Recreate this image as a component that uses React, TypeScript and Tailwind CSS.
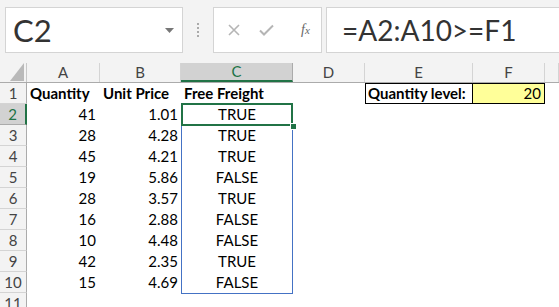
import React from "react";

const cols = [
  { w: 73, l: "A" },
  { w: 81, l: "B" },
  { w: 112, l: "C" },
  { w: 72, l: "D" },
  { w: 108, l: "E" },
  { w: 72, l: "F" },
  { w: 14, l: "" },
];

const data: [string, string, string][] = [
  ["41", "1.01", "TRUE"],
  ["28", "4.28", "TRUE"],
  ["45", "4.21", "TRUE"],
  ["19", "5.86", "FALSE"],
  ["28", "3.57", "TRUE"],
  ["16", "2.88", "FALSE"],
  ["10", "4.48", "FALSE"],
  ["42", "2.35", "TRUE"],
  ["15", "4.69", "FALSE"],
];

const font = { fontFamily: "Lato, 'Open Sans', sans-serif" };

export default function App() {
  return (
    <div
      className="relative w-[559px] h-[307px] overflow-hidden bg-white text-black"
      style={font}
    >
      {/* Formula bar */}
      <div className="h-[63px] bg-[#f3f3f3] flex items-start pt-[7px] pl-[5px]">
        <div className="w-[178px] h-[46px] bg-white border border-[#d4d4d4] flex items-center pl-[7px] pr-[8px]">
          <span className="text-[31px] text-[#333] leading-none flex-1">C2</span>
          <svg width="9" height="5" viewBox="0 0 9 5">
            <path d="M0 0 L9 0 L4.5 5 Z" fill="#777" />
          </svg>
        </div>
        <div className="w-[30px] h-[46px] flex flex-col items-center justify-center gap-[2px]">
          <span className="w-[2px] h-[2px] bg-[#aaa]" />
          <span className="w-[2px] h-[2px] bg-[#aaa]" />
          <span className="w-[2px] h-[2px] bg-[#aaa]" />
          <span className="w-[2px] h-[2px] bg-[#aaa]" />
        </div>
        <div className="w-[109px] h-[46px] bg-white border border-[#d4d4d4] flex items-center">
          <svg width="12" height="12" viewBox="0 0 12 12" className="ml-[14px]">
            <path d="M1 1 L11 11 M11 1 L1 11" stroke="#b5b5b5" strokeWidth="1.6" />
          </svg>
          <svg width="15" height="12" viewBox="0 0 15 12" className="ml-[19px]">
            <path d="M1 6.5 L5 10.5 L14 1.5" stroke="#b5b5b5" strokeWidth="2" fill="none" />
          </svg>
          <span
            className="ml-[27px] text-[14px] italic text-[#666] leading-none"
            style={{ fontFamily: "'Liberation Serif', serif" }}
          >
            f<span className="text-[11px]">x</span>
          </span>
        </div>
        <div className="ml-[4px] flex-1 h-[46px] bg-white border border-[#d4d4d4] border-r-0 flex items-center pl-[15px]">
          <span className="text-[28px] text-[#333] leading-none">=A2:A10&gt;=F1</span>
        </div>
      </div>

      {/* Grid */}
      <div className="relative">
        {/* Column headers */}
        <div className="flex h-[20px] bg-[#f3f3f3] border-b border-[#ababab]">
          <div className="relative w-[27px] shrink-0 border-r border-[#c8c8c8]">
            <svg width="14" height="18" viewBox="0 0 14 18" className="absolute right-[2px] bottom-[1px]">
              <path d="M14 0 L14 18 L0 18 Z" fill="#b9b9b9" />
            </svg>
          </div>
          {cols.map((c) => (
            <div
              key={c.l + c.w}
              className={
                c.l === "C"
                  ? "shrink-0 flex items-center justify-center text-[15px] bg-[#d2d2d2] text-[#217346] border-r border-[#ababab] border-b-2 border-b-[#217346]"
                  : "shrink-0 flex items-center justify-center text-[15px] text-[#444] border-r border-[#d4d4d4]"
              }
              style={{ width: c.w }}
            >
              {c.l}
            </div>
          ))}
        </div>

        {/* Row 1 */}
        <div className="flex h-[21px]">
          <div className="w-[27px] shrink-0 bg-[#f3f3f3] border-r border-[#ababab] border-b border-b-[#d4d4d4] flex items-center justify-center text-[15px] text-[#444]">
            1
          </div>
          <div className="w-[73px] shrink-0 flex items-center pl-[3px] text-[15px] font-bold">Quantity</div>
          <div className="w-[81px] shrink-0 flex items-center pl-[3px] text-[15px] font-bold">Unit Price</div>
          <div className="w-[112px] shrink-0 flex items-center pl-[3px] text-[15px] font-bold">Free Freight</div>
          <div className="w-[72px] shrink-0" />
          <div className="w-[108px] shrink-0 flex items-center pl-[2px] text-[15px] font-bold border border-black">
            Quantity level:
          </div>
          <div className="w-[72px] shrink-0 flex items-center justify-end pr-[3px] text-[15px] bg-[#ffff99] border border-l-0 border-black">
            20
          </div>
        </div>

        {/* Rows 2-10 */}
        {data.map((r, i) => (
          <div key={i} className="flex h-[21px]">
            <div
              className={
                i === 0
                  ? "w-[27px] shrink-0 bg-[#d2d2d2] border-r-2 border-[#217346] border-b border-b-[#ababab] flex items-center justify-center text-[15px] text-[#217346]"
                  : "w-[27px] shrink-0 bg-[#f3f3f3] border-r border-[#ababab] border-b border-b-[#d4d4d4] flex items-center justify-center text-[15px] text-[#444]"
              }
            >
              {i + 2}
            </div>
            <div className="w-[73px] shrink-0 flex items-center justify-end pr-[4px] text-[15px]">{r[0]}</div>
            <div className="w-[81px] shrink-0 flex items-center justify-end pr-[3px] text-[15px]">{r[1]}</div>
            <div className="w-[112px] shrink-0 flex items-center justify-center text-[15px]">{r[2]}</div>
          </div>
        ))}

        {/* Row 11 */}
        <div className="flex h-[21px]">
          <div className="w-[27px] shrink-0 bg-[#f3f3f3] border-r border-[#ababab] flex items-center justify-center text-[15px] text-[#444]">
            11
          </div>
        </div>

        {/* Spill range border */}
        <div className="absolute left-[181px] top-[41px] w-[112px] h-[190px] border border-[#4472c4] pointer-events-none" />
        {/* Active cell */}
        <div className="absolute left-[181px] top-[40px] w-[112px] h-[23px] border-2 border-[#217346] pointer-events-none" />
        <div className="absolute left-[290px] top-[60px] w-[5px] h-[5px] bg-[#217346] border border-white box-content pointer-events-none" />
      </div>
    </div>
  );
}
